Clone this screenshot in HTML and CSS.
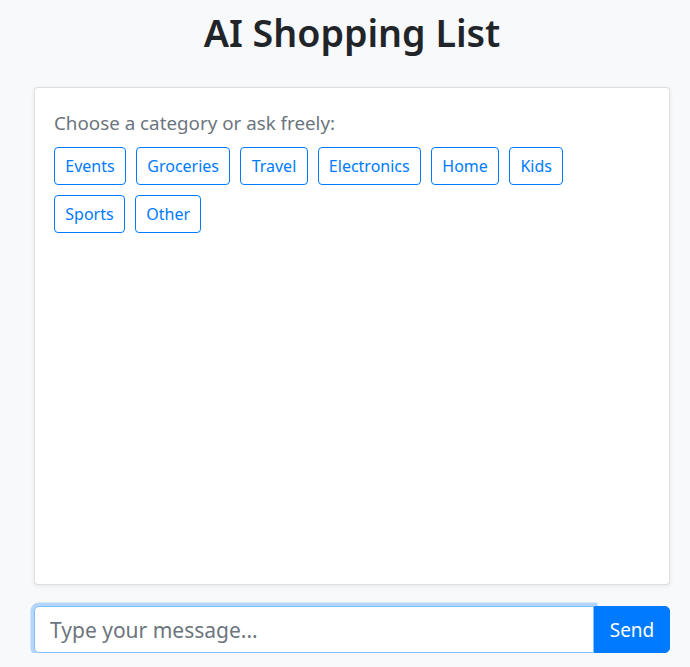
FILE: index.html
```html
<!DOCTYPE html>
<html lang="en">
<head>
<meta charset="utf-8">
<title>AI Shopping List</title>
<link rel="stylesheet" href="styles.css">
</head>
<body>
<div class="app">
  <h1 class="title">AI Shopping List</h1>
  <div class="chat-card">
    <p class="prompt">Choose a category or ask freely:</p>
    <div class="categories">
      <button class="cat-btn">Events</button>
      <button class="cat-btn">Groceries</button>
      <button class="cat-btn">Travel</button>
      <button class="cat-btn">Electronics</button>
      <button class="cat-btn">Home</button>
      <button class="cat-btn">Kids</button>
      <button class="cat-btn">Sports</button>
      <button class="cat-btn">Other</button>
    </div>
  </div>
  <div class="input-row">
    <input class="msg-input" type="text" placeholder="Type your message...">
    <button class="send-btn">Send</button>
  </div>
</div>
</body>
</html>
```
FILE: styles.css
```css
* { box-sizing: border-box; }
body {
  margin: 0;
  background: #f8f9fa;
  font-family: "Noto Sans", "Open Sans", sans-serif;
  color: #212529;
}
.app {
  width: 636px;
  margin-left: 34px;
  padding-top: 9px;
}
.title {
  margin: 0 0 30px;
  text-align: center;
  font-size: 37.6px;
  line-height: 48px;
  font-weight: 600;
  color: #212529;
}
.chat-card {
  height: 498px;
  background: #fff;
  border: 1px solid rgba(0,0,0,.125);
  border-radius: 4px;
  box-shadow: 0 1px 4px rgba(0,0,0,.08);
  padding: 21px 19px;
}
.prompt {
  margin: 0 0 10px;
  font-size: 18.8px;
  line-height: 28px;
  color: #6c757d;
}
.categories {
  display: flex;
  flex-wrap: wrap;
}
.cat-btn {
  height: 38px;
  margin: 0 10px 10px 0;
  padding: 0 10.3px;
  background: #fff;
  border: 1px solid #007bff;
  border-radius: 4px;
  color: #007bff;
  font-family: inherit;
  font-size: 16px;
}
.input-row {
  display: flex;
  margin-top: 21px;
  height: 47px;
}
.msg-input {
  flex: 1;
  height: 47px;
  border: 1px solid #80bdff;
  border-radius: 5px 0 0 5px;
  box-shadow: 0 0 0 3.5px rgba(0,123,255,.27);
  padding: 0 15px;
  font-family: inherit;
  font-size: 21px;
  color: #495057;
  outline: none;
}
.msg-input::placeholder { color: #6c757d; }
.send-btn {
  width: 76px;
  height: 47px;
  border: 1px solid #007bff;
  background: #007bff;
  color: #fff;
  border-radius: 0 5px 5px 0;
  font-family: inherit;
  font-size: 19px;
}
```
